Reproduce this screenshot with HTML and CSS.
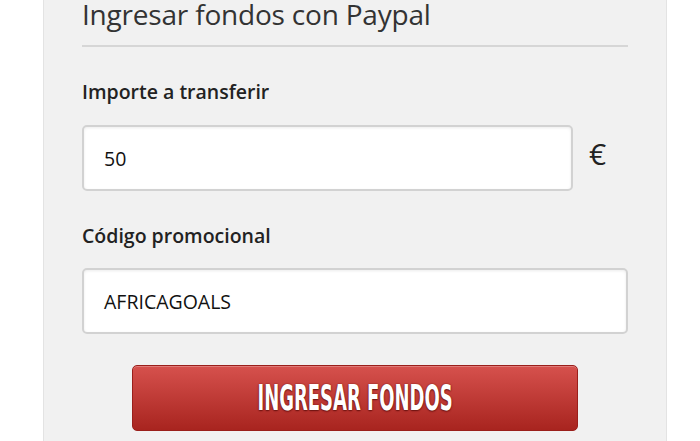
FILE: index.html
```html
<!DOCTYPE html>
<html lang="es">
<head>
<meta charset="utf-8">
<link rel="stylesheet" href="styles.css">
</head>
<body>
<div class="panel">
  <h2 class="title">Ingresar fondos con Paypal</h2>
  <div class="rule"></div>
  <label class="label">Importe a transferir</label>
  <div class="row">
    <div class="field field-amount">50</div>
    <span class="currency">€</span>
  </div>
  <label class="label label-promo">Código promocional</label>
  <div class="field">AFRICAGOALS</div>
  <div class="actions">
    <button class="btn"><span class="btn-text">INGRESAR FONDOS</span></button>
  </div>
</div>
</body>
</html>
```
FILE: styles.css
```css
html, body {
  margin: 0;
  padding: 0;
  background: #ffffff;
}
body {
  font-family: "Open Sans", "Noto Sans", sans-serif;
  color: #222;
}
.panel {
  margin-left: 43px;
  width: 624px;
  height: 441px;
  box-sizing: border-box;
  background: #f1f1f1;
  border-left: 1px solid #e3e3e3;
  border-right: 1px solid #e3e3e3;
  padding: 0 38px;
  display: flex;
  flex-direction: column;
}
.title {
  margin: -1px 0 0 0;
  font-weight: 400;
  font-size: 28px;
  line-height: 30px;
  color: #333;
  letter-spacing: -0.2px;
}
.rule {
  height: 2px;
  background: #d6d6d6;
  margin-top: 16px;
}
.label {
  display: block;
  margin-top: 32px;
  font-weight: 600;
  font-size: 19.5px;
  line-height: 26px;
  color: #222;
}
.label-promo {
  margin-top: 32px;
}
.row {
  display: flex;
  align-items: flex-start;
  margin-top: 20px;
}
.field {
  box-sizing: border-box;
  height: 66px;
  background: #fff;
  border: 2px solid #d2d2d2;
  border-radius: 5px;
  box-shadow: inset 0 1px 3px rgba(0,0,0,0.08);
  padding: 0 20px;
  display: flex;
  align-items: center;
  font-size: 19.5px;
  color: #111;
}
.label-promo + .field {
  margin-top: 19px;
}
.field-amount {
  width: 491px;
}
.currency {
  margin-left: 16px;
  margin-top: 9px;
  font-size: 30px;
  line-height: 40px;
  color: #222;
}
.actions {
  display: flex;
  justify-content: center;
  margin-top: 31px;
}
.btn {
  width: 446px;
  height: 66px;
  border: 1px solid #9a1f1b;
  border-radius: 5px;
  background: linear-gradient(#d6514d, #a8241f);
  box-shadow: inset 0 1px 0 rgba(255,255,255,0.25);
  color: #fff;
  font-family: "DejaVu Sans Condensed", "DejaVu Sans", sans-serif;
  font-stretch: condensed;
  font-weight: bold;
  font-size: 35px;
  text-shadow: 0 0 2px #6a1210, 0 1px 2px #6a1210;
  padding: 0;
  display: flex;
  align-items: center;
  justify-content: center;
  overflow: hidden;
}
.btn-text {
  display: inline-block;
  white-space: nowrap;
  transform: scaleX(0.57);
}
```
